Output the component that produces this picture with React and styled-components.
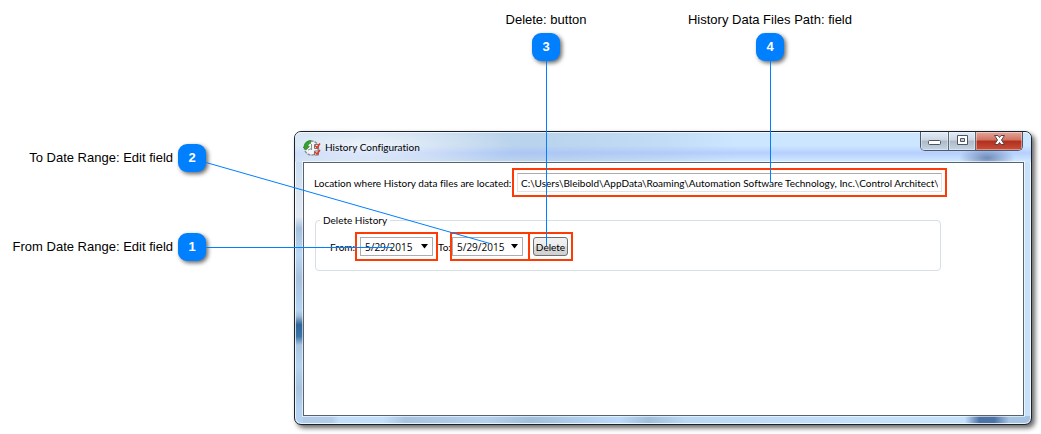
import React from "react";
import styled, { createGlobalStyle, css } from "styled-components";

const ACCENT = "#0080ff";
const ALERT = "#ff3b05";

const GlobalStyle = createGlobalStyle`
  * { box-sizing: border-box; }
  body { margin: 0; background: #fff; color: #000; }
  button, input { font: inherit; color: inherit; }
`;

const Figure = styled.main`
  position: relative;
  display: grid;
  grid-template-columns: 294px minmax(680px, 1fr);
  padding: 0 9px 9px 0;
  font: 13px/16px "Liberation Sans", Arial, sans-serif;
`;

const TopNotes = styled.div`
  grid-column: 1 / -1;
  display: flex;
  padding: 12px 0 70px 434px;
`;

const SideNotes = styled.div`
  display: flex;
  flex-direction: column;
  gap: 61px;
  padding: 13px 88px 0 0;
`;

const Note = styled.div`
  display: flex;
  align-items: center;
  white-space: nowrap;
  ${(p) =>
    p.$stacked
      ? css`
          flex-direction: column;
          gap: 5px;
          width: 224px;
        `
      : css`
          justify-content: flex-end;
          gap: 5px;
        `}
`;

const Badge = styled.span`
  width: 28px;
  height: 28px;
  border-radius: 9px;
  background: ${ACCENT};
  color: #fff;
  font-weight: bold;
  line-height: 28px;
  text-align: center;
  box-shadow: 2px 2px 4px rgba(0, 0, 0, 0.6);
`;

const Leaders = styled.svg`
  position: absolute;
  inset: 0;
  width: 100%;
  height: 100%;
  pointer-events: none;
  stroke: ${ACCENT};
  stroke-width: 1;
`;

const Window = styled.section`
  display: flex;
  flex-direction: column;
  padding: 0 7px 8px 8px;
  border: 1px solid #1b222b;
  border-radius: 7px;
  font: 10px/14px Lato, "Open Sans", sans-serif;
  font-variant-ligatures: none;
  background:
    linear-gradient(#c3dbf3 0 8%, #d8e4f0 20%, #e3e9f2 29%, #a3bfdb 33%, #b9d9f6 42%, #a6c0dd 50%, #b3d5f4 61%, #a2bbd8 63%, #2f6499 66%, #3a74a8 70%, #a9c4e1 73%, #b4d4f2 80%, #a6c2de 88%, #b4d3f2 95%) left / 8px 100% no-repeat,
    linear-gradient(90deg, transparent 91%, #4c73a6 93% 95%, #a5c3e2 97%) bottom / 100% 8px no-repeat,
    linear-gradient(90deg, #b0cce9 5%, #c1dffd 6% 12%, #a5c4e1 15%, #b3d1ed 26%, #9fbfdc 32%, #b9dafa 44%, #9fbedb 48%, #b8d8f6 53%, #c4e1fc 80%) bottom / 100% 8px no-repeat,
    #c8e0fa;
  box-shadow: inset 0 0 0 1px rgba(255, 255, 255, 0.75), 3px 3px 5px rgba(0, 0, 0, 0.6);
`;

const TitleBar = styled.header`
  display: flex;
  align-items: flex-start;
  height: 30px;
  margin: 0 -7px 0 -8px;
  padding: 0 8px;
  border-radius: 6px 6px 0 0;
  box-shadow: inset 0 1px 0 rgba(255, 255, 255, 0.7);
  background:
    radial-gradient(ellipse 150px 30px at 70px 14px, rgba(255, 255, 255, 0.7), transparent),
    radial-gradient(ellipse 28px 12px at calc(100% - 44px) 26px, rgba(90, 120, 165, 0.8), transparent),
    linear-gradient(transparent 45%, rgba(160, 185, 255, 0.5) 70%, transparent 95%),
    linear-gradient(90deg, #c6daf0, #b9d3ec 32%, #c3dcf5 50%, #cde6ff 60%);
`;

const Title = styled.h1`
  flex: 1;
  margin: 0;
  padding: 8px 0 0 4px;
  font-size: 10px;
  font-weight: 400;
`;

const AppIcon = styled.svg`
  width: 18px;
  height: 18px;
  margin-top: 7px;
`;

const Caption = styled.div`
  display: flex;
  height: 19px;
  border: 1px solid #4d5968;
  border-top: 0;
  border-radius: 0 0 5px 5px;
  overflow: hidden;
`;

const CaptionButton = styled.button`
  display: grid;
  place-items: center;
  width: ${(p) => (p.$close ? 47 : 27)}px;
  padding: 0 0 1px;
  border: 0;
  border-left: ${(p) => (p.$first ? "0" : "1px solid #5b6775")};
  background: ${(p) =>
    p.$close
      ? "linear-gradient(#e3a699, #cf7262 45%, #b22e1c 50%, #c8503a)"
      : "linear-gradient(#e3edf8, #ccd6e2 45%, #adb9c8 50%, #c5d3e3)"};
  box-shadow: inset 0 0 0 1px rgba(255, 255, 255, 0.4);
`;

const Client = styled.div`
  min-height: 254px;
  padding: 5px 10px 12px;
  border: 1px solid #59636f;
  background: #fff;
  box-shadow: 0 0 0 1px rgba(255, 255, 255, 0.6);
`;

const Row = styled.div`
  display: flex;
  align-items: center;
  white-space: nowrap;
`;

const Highlight = styled.div`
  display: flex;
  flex: none;
  height: 29px;
  padding: 3px;
  border: 2px solid ${ALERT};
  width: ${(p) => p.$width}px;
  margin-left: ${(p) => (p.$joined ? "-2px" : "0")};
  padding-left: ${(p) => (p.$flush ? "0" : "3px")};
  padding-right: ${(p) => (p.$flush ? "5px" : "3px")};
`;

const FieldLabel = styled.label`
  flex: none;
  width: ${(p) => p.$width}px;
`;

const PathInput = styled.input`
  width: 100%;
  height: 19px;
  padding: 0 3px;
  border: 1px solid #e0e3e8;
  border-top-color: #abadb3;
  background: #fff;
`;

const DateBox = styled.div`
  display: flex;
  align-items: center;
  width: 100%;
  height: 19px;
  border: 1px solid #abadb3;
`;

const DateInput = styled.input`
  flex: 1;
  min-width: 0;
  padding: 0 0 0 4px;
  border: 0;
  background: transparent;
  font-family: "Open Sans", sans-serif;
`;

const DropButton = styled.button`
  display: flex;
  padding: 0 4px;
  border: 0;
  background: none;
`;

const DeleteButton = styled.button`
  width: 100%;
  height: 19px;
  padding: 0;
  border: 1px solid #707070;
  border-radius: 3px;
  background: linear-gradient(#f2f2f2, #ebebeb 50%, #dddddd 50%, #cfcfcf);
  line-height: 16px;
`;

const Group = styled.fieldset`
  width: 626px;
  height: 58px;
  margin: 16px 0 0 1px;
  padding: 5px 14px;
  border: 1px solid #d5dfe5;
  border-radius: 4px;
`;

const Legend = styled.legend`
  margin-left: -10px;
  padding: 0 3px;
`;

function DateField({ id }) {
  return (
    <DateBox>
      <DateInput id={id} type="text" defaultValue="5/29/2015" />
      <DropButton type="button" aria-label="Open calendar">
        <svg width="7" height="5" viewBox="0 0 7 5">
          <path d="M0 0h7L3.500 4.500z" />
        </svg>
      </DropButton>
    </DateBox>
  );
}

function HistoryIcon() {
  return (
    <AppIcon viewBox="0 0 18 18" aria-hidden="true">
      <circle cx="8.500" cy="9" r="7" fill="#f3f5f5" stroke="#8b9196" strokeWidth="1.500" strokeDasharray="3 1" />
      <path d="M8.500 5v6M5 11l3.500-1.500" fill="none" stroke="#8d9298" />
      <path d="M1 8.500C1 4 4 1.500 8 1.500l-.5 3C5.500 4.500 5 6 5 7.500h1.500L3 11 0 8z" fill="#35a32b" stroke="#14731a" strokeWidth=".5" />
      <path d="M11.500 5.500h4v4h-4zM11.500 12h4v4h-4z" fill="#fff" stroke="#777" />
      <path d="M12 6.500l2 2 3-4M12 13l2 2 3-4" fill="none" stroke="#e8331d" strokeWidth="1.500" />
    </AppIcon>
  );
}

export default function App() {
  return (
    <>
      <GlobalStyle />
      <Figure>
        <TopNotes>
          <Note $stacked>Delete: button<Badge>3</Badge></Note>
          <Note $stacked>History Data Files Path: field<Badge>4</Badge></Note>
        </TopNotes>
        <SideNotes>
          <Note>To Date Range: Edit field<Badge>2</Badge></Note>
          <Note>From Date Range: Edit field<Badge>1</Badge></Note>
        </SideNotes>
        <Window aria-label="History Configuration">
          <TitleBar>
            <HistoryIcon />
            <Title>History Configuration</Title>
            <Caption>
              <CaptionButton $first aria-label="Minimize">
                <svg width="13" height="13" viewBox="0 0 13 13">
                  <rect x=".5" y="6.500" width="12" height="4" rx="1" fill="#fff" stroke="#4f5560" />
                </svg>
              </CaptionButton>
              <CaptionButton aria-label="Maximize">
                <svg width="13" height="13" viewBox="0 0 13 13">
                  <path d="M1.500 1.500h10v9h-10zM4.500 4.500h4v3h-4z" fill="#fff" fillRule="evenodd" stroke="#4f5560" />
                </svg>
              </CaptionButton>
              <CaptionButton $close aria-label="Close">
                <svg width="13" height="13" viewBox="0 0 13 13">
                  <path d="M1.500 1.500h3.500l1.500 2 1.500-2h3.500L8.500 6l3 4.500H8l-1.500-2-1.500 2H1.500l3-4.500z" fill="#fff" stroke="#59434a" />
                </svg>
              </CaptionButton>
            </Caption>
          </TitleBar>
          <Client>
            <Row>
              <FieldLabel htmlFor="path" $width={198}>Location where History data files are located:</FieldLabel>
              <Highlight $width={435}>
                <PathInput
                  id="path"
                  type="text"
                  defaultValue={"C:\\Users\\Bleibold\\AppData\\Roaming\\Automation Software Technology, Inc.\\Control Architect\\"}
                />
              </Highlight>
            </Row>
            <Group>
              <Legend>Delete History</Legend>
              <Row>
                <FieldLabel htmlFor="from" $width={25}>From:</FieldLabel>
                <Highlight $width={83}><DateField id="from" /></Highlight>
                <FieldLabel htmlFor="to" $width={12}>To:</FieldLabel>
                <Highlight $width={80} $flush><DateField id="to" /></Highlight>
                <Highlight $width={45} $joined><DeleteButton type="button">Delete</DeleteButton></Highlight>
              </Row>
            </Group>
          </Client>
        </Window>
        <Leaders aria-hidden="true">
          <path d="M205 247.500H393M206 162.500L490 243.500M546.500 61V246M770.500 61V183" />
        </Leaders>
      </Figure>
    </>
  );
}
